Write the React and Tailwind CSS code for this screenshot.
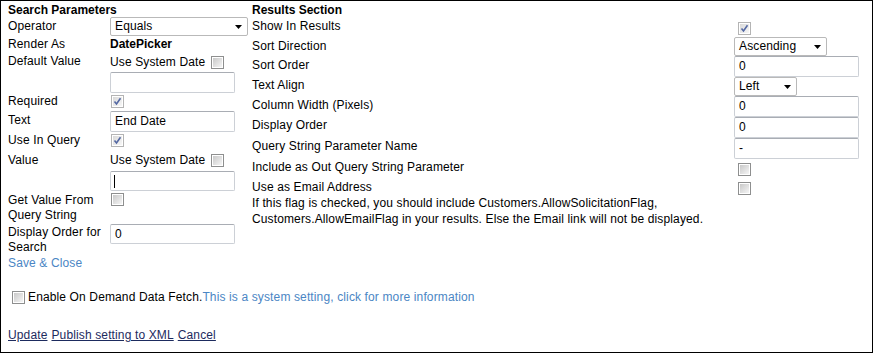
import React from 'react';

const CheckBox = ({ checked }) => (
    <span
        className={`inline-flex shrink-0 w-[13px] h-[13px] border p-[1px] bg-white ${checked ? 'border-[#b4b4b4]' : 'border-[#8e8f8f]'}`}
    >
        <span
            className={`relative block w-full h-full bg-linear-to-br ${checked ? 'from-[#d9d9d9] to-[#f7f7f7]' : 'from-[#c9c9c9] to-[#f5f5f5]'}`}
        >
            {checked && (
                <svg className="absolute left-0 top-0" width="9" height="9" viewBox="0 0 9 9">
                    <path d="M1.5 4.5 L3.5 7 L7.5 1.2" fill="none" stroke="#5468a3" strokeWidth="1.6" />
                </svg>
            )}
        </span>
    </span>
);

const Select = ({ value, width }) => (
    <div
        className="flex items-center justify-between h-[19px] border border-[#b9b9b9] rounded-[2px] bg-white pl-[4px] pr-[5px]"
        style={{ width }}
    >
        <span>{value}</span>
        <svg width="7" height="4" viewBox="0 0 7 4">
            <path d="M0 0 H7 L3.5 4 Z" fill="#000" />
        </svg>
    </div>
);

const TextBox = ({ value, width = 125, height = 21, caret }) => (
    <div
        className="flex items-center border border-[#ccd0d6] border-t-[#a9adb4] rounded-[2px] bg-white px-[4px]"
        style={{ width, height }}
    >
        {caret ? <span className="block w-px h-[13px] bg-black -ml-[1px]" /> : value}
    </div>
);

const LeftRow = ({ label, h, pt = 'pt-[1px]', children }) => (
    <div className={`flex ${h}`}>
        <div className={`w-[102px] shrink-0 ${pt}`}>{label}</div>
        <div className="flex-1">{children}</div>
    </div>
);

const RightRow = ({ label, h, pt = 'pt-[1px]', children }) => (
    <div className={`flex ${h}`}>
        <div className={`w-[482px] shrink-0 ${pt}`}>{label}</div>
        <div>{children}</div>
    </div>
);

export default function App() {
    return (
        <div className="w-[873px] h-[353px] border border-black bg-white text-black text-[12px] leading-[15px] tracking-[0.13px] font-['Liberation_Sans',Arial,sans-serif] overflow-hidden">
            <div className="flex pl-[7px]">
                {/* Search parameters */}
                <div className="w-[244px] shrink-0">
                    <div className="h-[16px] pt-[2px] font-bold tracking-normal">Search Parameters</div>
                    <LeftRow label="Operator" h="h-[19px]" pt="pt-[2px]">
                        <Select value="Equals" width={138} />
                    </LeftRow>
                    <LeftRow label="Render As" h="h-[17px]">
                        <div className="pt-[1px] font-bold tracking-normal">DatePicker</div>
                    </LeftRow>
                    <LeftRow label="Default Value" h="h-[18px]">
                        <div className="flex items-center gap-[6px] pt-[1px]">
                            <span className="pt-[1px]">Use System Date</span>
                            <CheckBox />
                        </div>
                    </LeftRow>
                    <LeftRow label="" h="h-[22px]">
                        <div className="pt-[1px]">
                            <TextBox value="" height={21} />
                        </div>
                    </LeftRow>
                    <LeftRow label="Required" h="h-[17px]">
                        <div className="pt-[2px] pl-[1px]">
                            <CheckBox checked />
                        </div>
                    </LeftRow>
                    <LeftRow label="Text" h="h-[22px]" pt="pt-[3px]">
                        <div className="pt-[1px]">
                            <TextBox value="End Date" />
                        </div>
                    </LeftRow>
                    <LeftRow label="Use In Query" h="h-[18px]">
                        <div className="pt-[2px] pl-[1px]">
                            <CheckBox checked />
                        </div>
                    </LeftRow>
                    <LeftRow label="Value" h="h-[19px]" pt="pt-[3px]">
                        <div className="flex items-center gap-[6px] pt-[2px]">
                            <span className="pt-[1px]">Use System Date</span>
                            <CheckBox />
                        </div>
                    </LeftRow>
                    <LeftRow label="" h="h-[23px]">
                        <div className="pt-[2px]">
                            <TextBox caret height={20} />
                        </div>
                    </LeftRow>
                    <LeftRow label="Get Value From Query String" h="h-[30px]">
                        <div className="pt-[1px] pl-[1px]">
                            <CheckBox />
                        </div>
                    </LeftRow>
                    <LeftRow label="Display Order for Search" h="h-[33px]" pt="pt-[3px]">
                        <div className="pt-[2px]">
                            <TextBox value="0" height={20} />
                        </div>
                    </LeftRow>
                    <div className="h-[16px] pt-[1px] text-[#4b86c4]">Save &amp; Close</div>
                </div>

                {/* Results section */}
                <div className="flex-1">
                    <div className="h-[16px] pt-[2px] font-bold tracking-normal">Results Section</div>
                    <RightRow label="Show In Results" h="h-[19px]" pt="pt-[2px]">
                        <div className="pt-[5px] pl-[4px]">
                            <CheckBox checked />
                        </div>
                    </RightRow>
                    <RightRow label="Sort Direction" h="h-[20px]" pt="pt-[3px]">
                        <div className="pt-[1px]">
                            <Select value="Ascending" width={93} />
                        </div>
                    </RightRow>
                    <RightRow label="Sort Order" h="h-[21px]" pt="pt-[2px]">
                        <TextBox value="0" />
                    </RightRow>
                    <RightRow label="Text Align" h="h-[19px]">
                        <Select value="Left" width={63} />
                    </RightRow>
                    <RightRow label="Column Width (Pixels)" h="h-[21px]" pt="pt-[2px]">
                        <TextBox value="0" />
                    </RightRow>
                    <RightRow label="Display Order" h="h-[21px]">
                        <TextBox value="0" />
                    </RightRow>
                    <RightRow label="Query String Parameter Name" h="h-[21px]">
                        <TextBox value="-" />
                    </RightRow>
                    <RightRow label="Include as Out Query String Parameter" h="h-[20px]">
                        <div className="pt-[4px] pl-[4px]">
                            <CheckBox />
                        </div>
                    </RightRow>
                    <RightRow label="Use as Email Address" h="h-[15px]">
                        <div className="pt-[3px] pl-[4px]">
                            <CheckBox />
                        </div>
                    </RightRow>
                    <p className="leading-[16px] pt-[1px]">
                        If this flag is checked, you should include Customers.AllowSolicitationFlag,
                        <br />
                        Customers.AllowEmailFlag in your results. Else the Email link will not be displayed.
                    </p>
                </div>
            </div>

            <div className="flex items-center h-[15px] mt-[19px] pl-[11px]">
                <CheckBox />
                <span className="ml-[3px]">Enable On Demand Data Fetch.</span>
                <span className="text-[#4b86c4]">This is a system setting, click for more information</span>
            </div>

            <div className="mt-[23px] pl-[7px] flex gap-[4px] text-[#1d2b5e] underline">
                <span>Update</span>
                <span>Publish setting to XML</span>
                <span>Cancel</span>
            </div>
        </div>
    );
}
